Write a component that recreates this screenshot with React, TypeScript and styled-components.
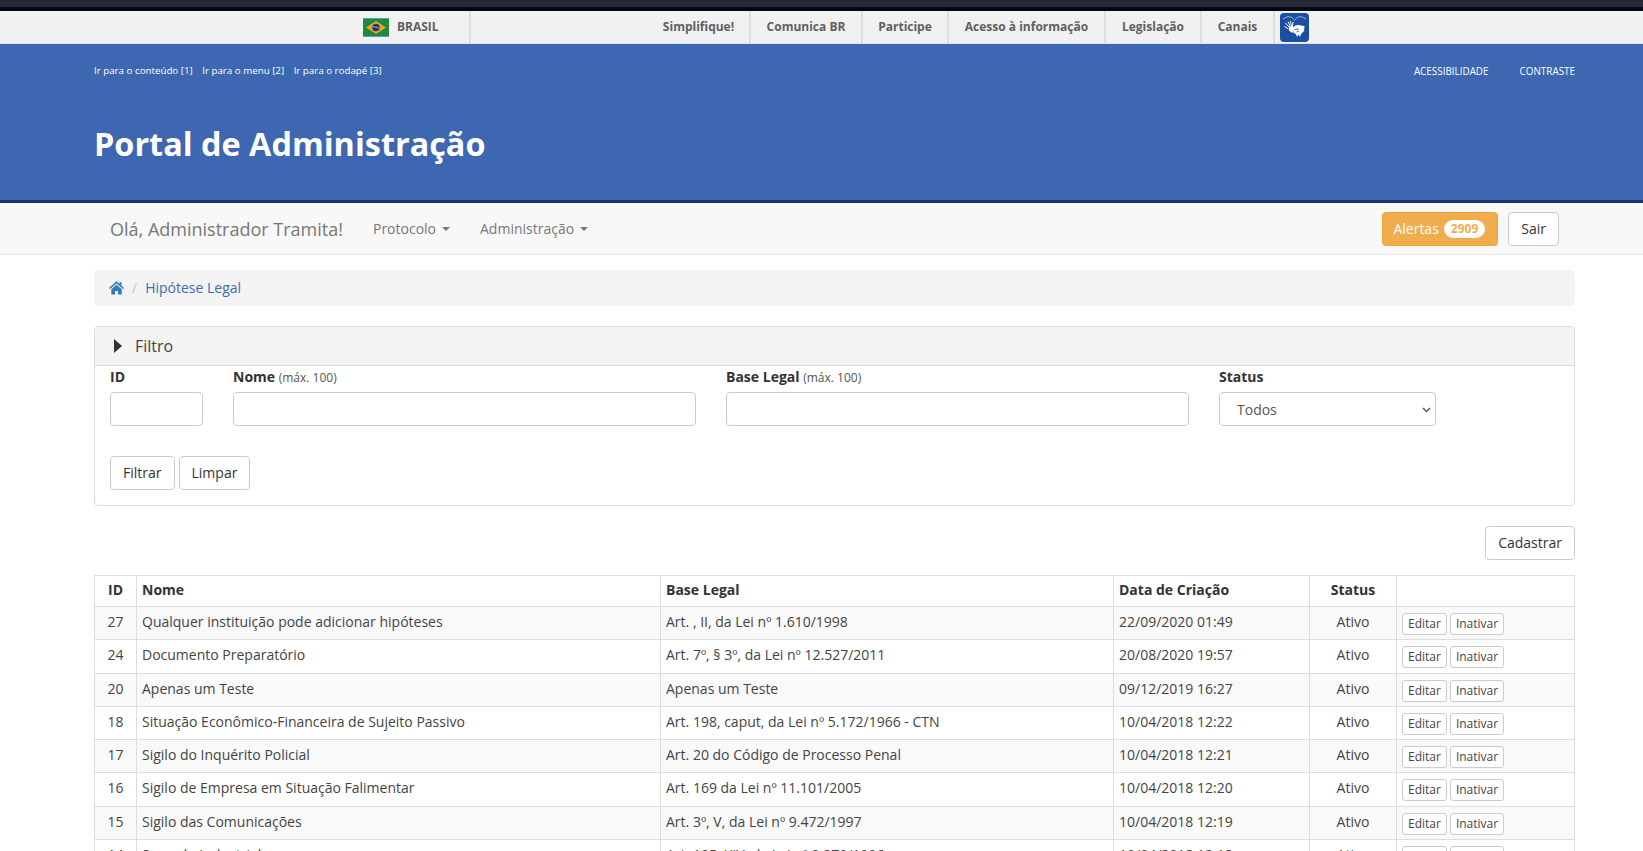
import React from "react";
import styled, { createGlobalStyle } from "styled-components";

const Global = createGlobalStyle`
    html, body {
        margin: 0;
        height: 851px;
        overflow: hidden;
        background: #fff;
    }
    * {
        box-sizing: border-box;
    }
    body {
        font-family: "Open Sans", "Liberation Sans", sans-serif;
        font-size: 14px;
        line-height: 20px;
        color: #333;
    }
`;

const WindowEdge = styled.div`
    height: 11px;
    background: #282a36;
    border-bottom: 4px solid #07071a;
`;

const GovBar = styled.div`
    height: 33px;
    background: #f1f1f1;
    border-bottom: 1px solid #e4e4e4;
    display: flex;
    align-items: stretch;
    padding-left: 363px;
`;

const CountryLink = styled.div`
    width: 108px;
    display: flex;
    align-items: center;
    gap: 8px;
    border-right: 2px solid #dfdfdf;
    font-size: 12px;
    font-weight: 700;
    color: #606060;
`;

const GovLinks = styled.nav`
    margin-left: 177px;
    display: flex;
    align-items: stretch;
`;

const GovLink = styled.a<{ $width: number }>`
    width: ${({ $width }) => $width}px;
    display: flex;
    align-items: center;
    justify-content: center;
    border-right: 2px solid #dfdfdf;
    font-size: 12px;
    font-weight: 700;
    color: #606060;
`;

const SignBadge = styled.div`
    margin: 2px 0 0 5px;
    width: 29px;
    height: 29px;
    border-radius: 4px;
    background: #1b4f9f;
    display: flex;
    align-items: center;
    justify-content: center;
`;

const Banner = styled.header`
    height: 159px;
    background: #3d67b1;
    border-bottom: 3px solid #1f3468;
    padding: 17px 68px 0 94px;
    color: #fff;
`;

const SkipRow = styled.div`
    display: flex;
    justify-content: space-between;
    font-size: 9.75px;
    line-height: 20px;
`;

const SkipLinks = styled.div`
    display: flex;
    gap: 9.5px;
`;

const AccessLinks = styled.div`
    display: flex;
    gap: 31px;
    font-size: 9.9px;
`;

const PortalTitle = styled.h1`
    margin: 40px 0 0;
    font-size: 32.4px;
    line-height: 44px;
    font-weight: 700;
`;

const NavBar = styled.div`
    height: 52px;
    background: #f8f8f8;
    border-bottom: 1px solid #e7e7e7;
    padding: 0 84px 0 110px;
    display: flex;
    align-items: center;
    color: #777;
`;

const Brand = styled.div`
    font-size: 18px;
    margin-right: 30px;
`;

const NavItem = styled.div`
    margin-right: 30px;
    display: flex;
    align-items: center;
    gap: 6px;
`;

const Caret = styled.span`
    width: 0;
    height: 0;
    border-top: 4px solid #777;
    border-left: 4px solid transparent;
    border-right: 4px solid transparent;
`;

const NavActions = styled.div`
    margin-left: auto;
    display: flex;
    gap: 10px;
`;

const Button = styled.button<{ $warning?: boolean }>`
    height: 34px;
    padding: ${({ $warning }) => ($warning ? "0 12px 0 10px" : "0 12px")};
    border: 1px solid ${({ $warning }) => ($warning ? "#eea236" : "#ccc")};
    border-radius: 4px;
    background: ${({ $warning }) => ($warning ? "#f0ad4e" : "#fff")};
    color: ${({ $warning }) => ($warning ? "#fff" : "#333")};
    font: inherit;
    display: flex;
    align-items: center;
`;

const AlertCount = styled.span`
    margin-left: 5px;
    padding: 3px 7px;
    min-width: 10px;
    border-radius: 10px;
    background: #fff;
    color: #f0ad4e;
    font-size: 12px;
    font-weight: 700;
    line-height: 12px;
`;

const Content = styled.main`
    padding: 15px 68px 0 94px;
`;

const Breadcrumb = styled.div`
    height: 36px;
    border-radius: 4px;
    background: #f3f3f3;
    padding: 0 15px;
    display: flex;
    align-items: center;
    color: #3a70ad;
`;

const Separator = styled.span`
    color: #ccc;
    margin: 0 8px;
`;

const Panel = styled.section`
    margin-top: 20px;
    height: 180px;
    border: 1px solid #ddd;
    border-radius: 4px;
`;

const PanelHeading = styled.div`
    height: 39px;
    padding: 0 15px 0 19px;
    background: #f3f3f3;
    border-bottom: 1px solid #ddd;
    display: flex;
    align-items: center;
    gap: 13px;
    font-size: 16px;
    color: #444;
    border-radius: 3px 3px 0 0;
`;

const PanelArrow = styled.span`
    width: 0;
    height: 0;
    border-left: 8px solid #333;
    border-top: 7.5px solid transparent;
    border-bottom: 7.5px solid transparent;
`;

const FilterGrid = styled.div`
    padding: 0 15px;
    display: grid;
    grid-template-columns: 93px 463px 463px 217px;
    column-gap: 30px;
`;

const Field = styled.label`
    display: block;
`;

const FieldLabel = styled.div`
    height: 26px;
    padding-top: 1px;
    font-weight: 700;
    small {
        font-size: 12px;
        font-weight: 400;
        color: #555;
    }
`;

const TextInput = styled.div`
    height: 34px;
    border: 1px solid #ccc;
    border-radius: 4px;
    background: #fff;
`;

const StatusSelect = styled(TextInput)`
    display: flex;
    align-items: center;
    justify-content: space-between;
    padding: 2px 4px 0 17px;
    color: #555;
`;

const FilterActions = styled.div`
    margin-top: 30px;
    padding: 0 15px;
    display: flex;
    gap: 4px;
`;

const TopActions = styled.div`
    margin-top: 20px;
    display: flex;
    justify-content: flex-end;
`;

const Table = styled.table`
    margin-top: 15px;
    width: 1480px;
    table-layout: fixed;
    border-collapse: collapse;
    th, td {
        border: 1px solid #ddd;
        padding: 5px 5px 4.29px;
        height: 33.29px;
        text-align: left;
        vertical-align: top;
        font-weight: 400;
        color: #444;
    }
    th {
        height: 31px;
        padding: 4px 5px;
        font-weight: 700;
        color: #333;
    }
    tbody tr:nth-child(odd) {
        background: #f9f9f9;
    }
`;

const Centered = styled.td`
    && {
        text-align: center;
    }
`;

const CenteredHead = styled.th`
    && {
        text-align: center;
    }
`;

const RowActions = styled.div`
    display: flex;
    gap: 3px;
    margin-top: 1px;
`;

const SmallButton = styled.button`
    height: 22px;
    padding: 0 5px;
    border: 1px solid #ccc;
    border-radius: 3px;
    background: #fff;
    color: #444;
    font: inherit;
    font-size: 12px;
    line-height: 18px;
`;

const rows = [
    ["27", "Qualquer instituição pode adicionar hipóteses", "Art. , II, da Lei nº 1.610/1998", "22/09/2020 01:49"],
    ["24", "Documento Preparatório", "Art. 7º, § 3º, da Lei nº 12.527/2011", "20/08/2020 19:57"],
    ["20", "Apenas um Teste", "Apenas um Teste", "09/12/2019 16:27"],
    ["18", "Situação Econômico-Financeira de Sujeito Passivo", "Art. 198, caput, da Lei nº 5.172/1966 - CTN", "10/04/2018 12:22"],
    ["17", "Sigilo do Inquérito Policial", "Art. 20 do Código de Processo Penal", "10/04/2018 12:21"],
    ["16", "Sigilo de Empresa em Situação Falimentar", "Art. 169 da Lei nº 11.101/2005", "10/04/2018 12:20"],
    ["15", "Sigilo das Comunicações", "Art. 3º, V, da Lei nº 9.472/1997", "10/04/2018 12:19"],
    ["14", "Segredo Industrial", "Art. 195, XIV, da Lei nº 9.279/1996", "10/04/2018 12:18"],
];

const govLinks: [string, number][] = [
    ["Simplifique!", 103],
    ["Comunica BR", 112],
    ["Participe", 86],
    ["Acesso à informação", 157],
    ["Legislação", 96],
    ["Canais", 73],
];

const Flag = () => (
    <svg width="26" height="19" viewBox="0 0 26 19">
        <rect width="26" height="19" fill="#5a9bc8" />
        <rect y="1" width="26" height="17" fill="#1d8a3c" />
        <path d="M13 3 L23 9.5 L13 16 L3 9.5 Z" fill="#eda51f" />
        <circle cx="13" cy="9.5" r="3.8" fill="#24386f" />
        <path d="M9.5 8.8 Q13 8.4 16.5 10.4" stroke="#d8d8d8" strokeWidth="0.7" fill="none" />
    </svg>
);

const SignIcon = () => (
    <svg width="27" height="27" viewBox="0 0 27 27">
        <path d="M2 5 Q7 1.5 10 3 L13.5 6 L17 3 Q20 1.5 25 5" stroke="#c9d7ee" strokeWidth="0.7" fill="none" />
        <path d="M4.5 9 L8 13 M7 7.5 L9.3 12.5 M9.6 7 L10.3 12 M12.2 8 L11.3 12.5 M3.5 12.5 L7.5 15" stroke="#fff" strokeWidth="1" fill="none" />
        <path d="M8 12.5 L12 12 L13 16 L11 19 L8 16.5 Z" fill="#fff" />
        <path d="M12 13.5 Q15 10 20 11.5 L23.5 12 L23 17 L20 20 L19 23 L17.5 20.5 L16 23 L15 20 L12.5 19 Z" fill="#fff" />
        <path d="M13.5 15.5 L18 15 M15.5 18 L18 17" stroke="#1b4f9f" strokeWidth="0.8" />
    </svg>
);

const HomeIcon = () => (
    <svg width="15" height="14" viewBox="0 0 15 14">
        <path d="M7.5 0.3 L10.5 3 V1.2 H12.5 V4.8 L15 7 L14 8.1 L7.5 2.6 L1 8.1 L0 7 Z" fill="#337ab7" />
        <path d="M2.3 8.2 L7.5 3.8 L12.7 8.2 V13.6 H9 V10 H6 V13.6 H2.3 Z" fill="#337ab7" />
    </svg>
);

const SelectChevron = () => (
    <svg width="9" height="6" viewBox="0 0 9 6">
        <path d="M1 1 L4.5 4.5 L8 1" stroke="#555" strokeWidth="1.4" fill="none" />
    </svg>
);

export default function App() {
    return (
        <>
            <Global />
            <WindowEdge />
            <GovBar>
                <CountryLink>
                    <Flag />
                    BRASIL
                </CountryLink>
                <GovLinks>
                    {govLinks.map(([label, width]) => (
                        <GovLink key={label} $width={width}>{label}</GovLink>
                    ))}
                    <SignBadge>
                        <SignIcon />
                    </SignBadge>
                </GovLinks>
            </GovBar>
            <Banner>
                <SkipRow>
                    <SkipLinks>
                        <span>Ir para o conteúdo [1]</span>
                        <span>Ir para o menu [2]</span>
                        <span>Ir para o rodapé [3]</span>
                    </SkipLinks>
                    <AccessLinks>
                        <span>ACESSIBILIDADE</span>
                        <span>CONTRASTE</span>
                    </AccessLinks>
                </SkipRow>
                <PortalTitle>Portal de Administração</PortalTitle>
            </Banner>
            <NavBar>
                <Brand>Olá, Administrador Tramita!</Brand>
                <NavItem>Protocolo <Caret /></NavItem>
                <NavItem>Administração <Caret /></NavItem>
                <NavActions>
                    <Button $warning>Alertas <AlertCount>2909</AlertCount></Button>
                    <Button>Sair</Button>
                </NavActions>
            </NavBar>
            <Content>
                <Breadcrumb>
                    <HomeIcon />
                    <Separator>/</Separator>
                    Hipótese Legal
                </Breadcrumb>
                <Panel>
                    <PanelHeading>
                        <PanelArrow />
                        Filtro
                    </PanelHeading>
                    <FilterGrid>
                        <Field>
                            <FieldLabel>ID</FieldLabel>
                            <TextInput />
                        </Field>
                        <Field>
                            <FieldLabel>Nome <small>(máx. 100)</small></FieldLabel>
                            <TextInput />
                        </Field>
                        <Field>
                            <FieldLabel>Base Legal <small>(máx. 100)</small></FieldLabel>
                            <TextInput />
                        </Field>
                        <Field>
                            <FieldLabel>Status</FieldLabel>
                            <StatusSelect>
                                Todos
                                <SelectChevron />
                            </StatusSelect>
                        </Field>
                    </FilterGrid>
                    <FilterActions>
                        <Button>Filtrar</Button>
                        <Button>Limpar</Button>
                    </FilterActions>
                </Panel>
                <TopActions>
                    <Button>Cadastrar</Button>
                </TopActions>
                <Table>
                    <colgroup>
                        <col style={{ width: 42 }} />
                        <col style={{ width: 524 }} />
                        <col style={{ width: 453 }} />
                        <col style={{ width: 196 }} />
                        <col style={{ width: 87 }} />
                        <col style={{ width: 178 }} />
                    </colgroup>
                    <thead>
                        <tr>
                            <CenteredHead>ID</CenteredHead>
                            <th>Nome</th>
                            <th>Base Legal</th>
                            <th>Data de Criação</th>
                            <CenteredHead>Status</CenteredHead>
                            <th></th>
                        </tr>
                    </thead>
                    <tbody>
                        {rows.map(([id, name, base, date]) => (
                            <tr key={id}>
                                <Centered>{id}</Centered>
                                <td>{name}</td>
                                <td>{base}</td>
                                <td>{date}</td>
                                <Centered>Ativo</Centered>
                                <td>
                                    <RowActions>
                                        <SmallButton>Editar</SmallButton>
                                        <SmallButton>Inativar</SmallButton>
                                    </RowActions>
                                </td>
                            </tr>
                        ))}
                    </tbody>
                </Table>
            </Content>
        </>
    );
}
